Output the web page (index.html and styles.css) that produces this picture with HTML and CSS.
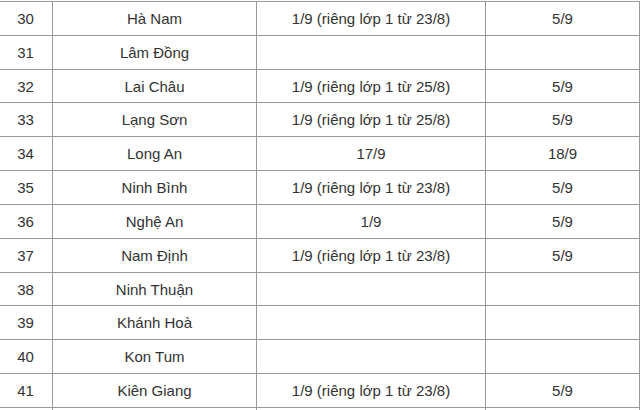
FILE: index.html
```html
<!DOCTYPE html>
<html lang="vi">
<head>
<meta charset="utf-8">
<link rel="stylesheet" href="styles.css">
</head>
<body>
<table class="schedule">
<colgroup>
<col class="c-no"><col class="c-name"><col class="c-start"><col class="c-open">
</colgroup>
<tbody>
<tr><td>30</td><td>Hà Nam</td><td>1/9 (riêng lớp 1 từ 23/8)</td><td>5/9</td></tr>
<tr><td>31</td><td>Lâm Đồng</td><td></td><td></td></tr>
<tr><td>32</td><td>Lai Châu</td><td>1/9 (riêng lớp 1 từ 25/8)</td><td>5/9</td></tr>
<tr><td>33</td><td>Lạng Sơn</td><td>1/9 (riêng lớp 1 từ 25/8)</td><td>5/9</td></tr>
<tr><td>34</td><td>Long An</td><td>17/9</td><td>18/9</td></tr>
<tr><td>35</td><td>Ninh Bình</td><td>1/9 (riêng lớp 1 từ 23/8)</td><td>5/9</td></tr>
<tr><td>36</td><td>Nghệ An</td><td>1/9</td><td>5/9</td></tr>
<tr><td>37</td><td>Nam Định</td><td>1/9 (riêng lớp 1 từ 23/8)</td><td>5/9</td></tr>
<tr><td>38</td><td>Ninh Thuận</td><td></td><td></td></tr>
<tr><td>39</td><td>Khánh Hoà</td><td></td><td></td></tr>
<tr><td>40</td><td>Kon Tum</td><td></td><td></td></tr>
<tr><td>41</td><td>Kiên Giang</td><td>1/9 (riêng lớp 1 từ 23/8)</td><td>5/9</td></tr>
<tr><td></td><td></td><td></td><td></td></tr>
</tbody>
</table>
</body>
</html>
```
FILE: styles.css
```css
html, body {
  margin: 0;
  padding: 0;
  background: #fff;
  overflow: hidden;
}
.schedule {
  border-collapse: collapse;
  table-layout: fixed;
  width: 641px;
  margin: 1px 0 0 -2px;
  font-family: "Liberation Sans", Arial, sans-serif;
  font-size: 15px;
  color: #333;
}
.c-no { width: 54px; }
.c-name { width: 204px; }
.c-start { width: 229px; }
.c-open { width: 154px; }
.schedule td {
  border: 1px solid #999;
  height: 32.83px;
  padding: 0;
  text-align: center;
  vertical-align: middle;
  line-height: 17px;
}
```
